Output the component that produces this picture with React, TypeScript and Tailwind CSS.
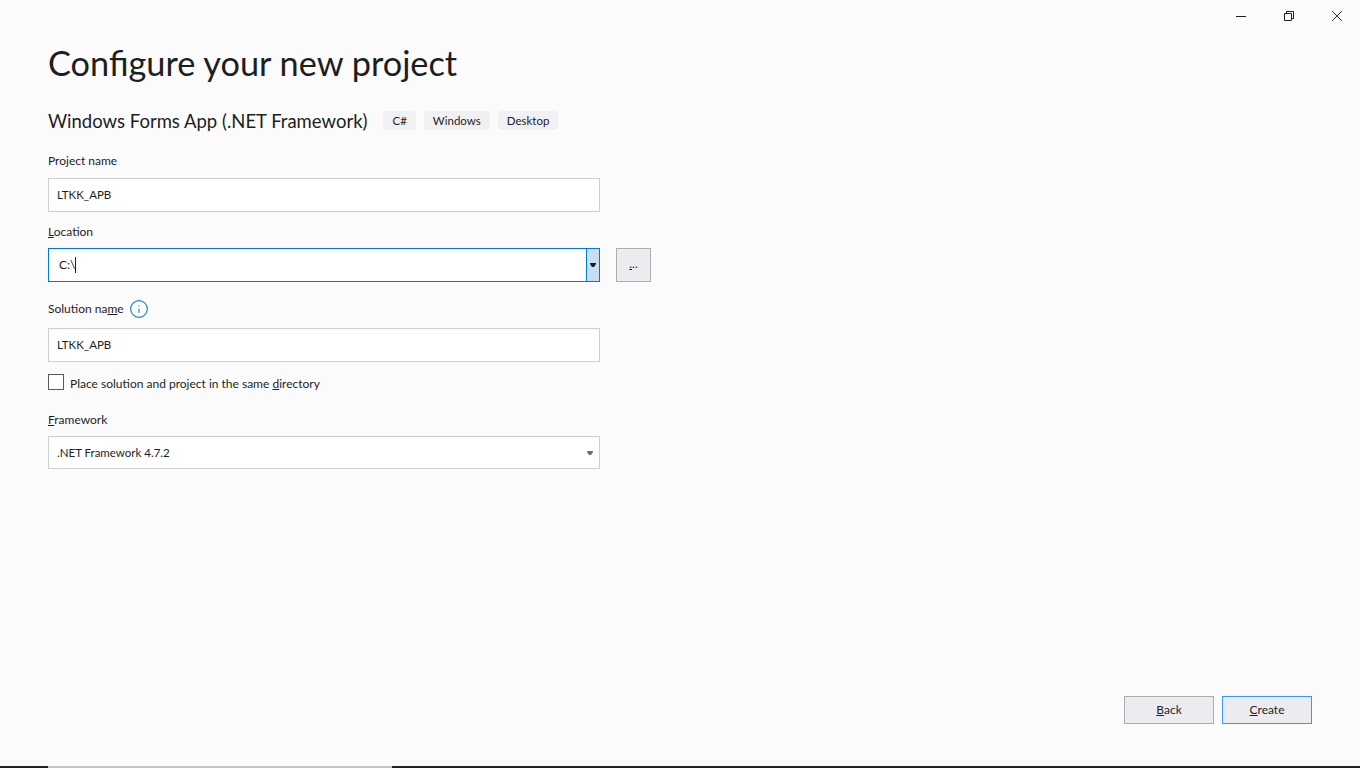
import { Info } from 'lucide-react';

function Field({ value }: { value: string }) {
  return (
    <div className="w-[552px] h-[34px] border border-[#cccedb] bg-white pl-2 flex items-center text-[11.5px] text-[#1e1e1e]">
      {value}
    </div>
  );
}

function Tag({ label }: { label: string }) {
  return (
    <span className="h-[19px] px-[9px] rounded-[3px] bg-[#f1f1f3] text-[11.5px] leading-[19px] text-[#1e1e1e]">
      {label}
    </span>
  );
}

function Caret({ color }: { color: string }) {
  return (
    <svg width="6" height="4" viewBox="0 0 6 4" fill={color}>
      <path d="M0 0h6v1L4 4H2L0 1z" />
    </svg>
  );
}

export default function App() {
  return (
    <div className="w-[1360px] h-[768px] flex flex-col overflow-hidden bg-[#fbfbfb] text-[#1e1e1e] font-['Lato',sans-serif]">
      {/* Window buttons */}
      <div className="h-[32px] flex justify-end items-start">
        <div className="w-[48px] h-[32px] flex items-center justify-center">
          <svg width="10" height="10" viewBox="0 0 10 10" stroke="#1e1e1e" fill="none">
            <path d="M0 5.500h10" />
          </svg>
        </div>
        <div className="w-[48px] h-[32px] mr-px flex items-center justify-center">
          <svg width="10" height="10" viewBox="0 0 10 10" stroke="#1e1e1e" fill="none">
            <path d="M.5 2.500h7v7h-7z M2.500 2.500v-2h7v7h-2" />
          </svg>
        </div>
        <div className="w-[46px] h-[32px] flex items-center justify-center">
          <svg width="10" height="10" viewBox="0 0 10 10" stroke="#3a3a3a" fill="none">
            <path d="M0 0l10 10M10 0L0 10" />
          </svg>
        </div>
      </div>

      <div className="flex-1 flex flex-col pl-12 pr-12">
        <h1 className="mt-[7px] h-[48px] text-[34.3px] leading-[48px] font-normal text-[#1e1e1e]">Configure your new project</h1>

        <div className="mt-[22px] h-[24px] flex items-center">
          <span className="text-[18.5px] leading-[24px] mr-[16px] -mt-px">Windows Forms App (.NET Framework)</span>
          <div className="flex gap-[8px] -mt-[2px]">
            <Tag label="C#" />
            <Tag label="Windows" />
            <Tag label="Desktop" />
          </div>
        </div>

        <label className="mt-[19px] h-[18px] text-[12px] leading-[18px]">Project name</label>
        <div className="mt-[8px]">
          <Field value="LTKK_APB" />
        </div>

        <label className="mt-[11px] h-[18px] text-[12px] leading-[18px]">
          <u>L</u>ocation
        </label>
        <div className="mt-[7px] flex items-center gap-[16px]">
          <div className="w-[552px] h-[34px] border border-[#007acc] bg-white flex">
            <div className="flex-1 pl-[10px] flex items-center text-[12px]">
              C:\<span className="w-px h-[16px] bg-[#1e1e1e]" />
            </div>
            <div className="w-[13px] border-l border-[#007acc] bg-[#c9def5] flex items-center justify-center">
              <Caret color="#1e1e1e" />
            </div>
          </div>
          <div className="w-[35px] h-[34px] border border-[#acacac] bg-[#ececf0] flex items-center justify-center text-[12px]">
            <span className="mt-[-2px]">
              <u>.</u>..
            </span>
          </div>
        </div>

        <div className="mt-[18px] h-[18px] flex items-center">
          <span className="text-[12px] leading-[18px]">
            Solution na<u>m</u>e
          </span>
          <Info className="ml-[5px] w-[20px] h-[20px] text-[#1b80d0]" strokeWidth={1.4} />
        </div>
        <div className="mt-[10px]">
          <Field value="LTKK_APB" />
        </div>

        <div className="mt-[12px] h-[16px] flex items-center">
          <span className="w-[16px] h-[16px] border border-[#5a5a5a] bg-white" />
          <span className="ml-[6px] mt-[3px] text-[12px]">
            Place solution and project in the same <u>d</u>irectory
          </span>
        </div>

        <label className="mt-[21px] h-[18px] text-[12px] leading-[18px]">
          <u>F</u>ramework
        </label>
        <div className="mt-[7px] w-[552px] h-[33px] border border-[#cccedb] bg-white pl-2 pr-[6px] flex items-center justify-between text-[11.5px]">
          <span>.NET Framework 4.7.2</span>
          <Caret color="#6d6d6d" />
        </div>

        <div className="mt-[227px] flex justify-end gap-[8px]">
          <button className="w-[90px] h-[28px] border border-[#acacac] bg-[#ececf0] text-[12px]">
            <u>B</u>ack
          </button>
          <button className="w-[90px] h-[28px] border border-[#3399ff] bg-[#ececf0] text-[12px]">
            <u>C</u>reate
          </button>
        </div>
        <div className="flex-1" />
      </div>

      {/* Taskbar edge */}
      <div className="h-[2px] flex">
        <div className="w-[48px] bg-[#222222]" />
        <div className="w-[344px] bg-[#c4c4c4]" />
        <div className="flex-1 bg-[#222222]" />
      </div>
    </div>
  );
}
